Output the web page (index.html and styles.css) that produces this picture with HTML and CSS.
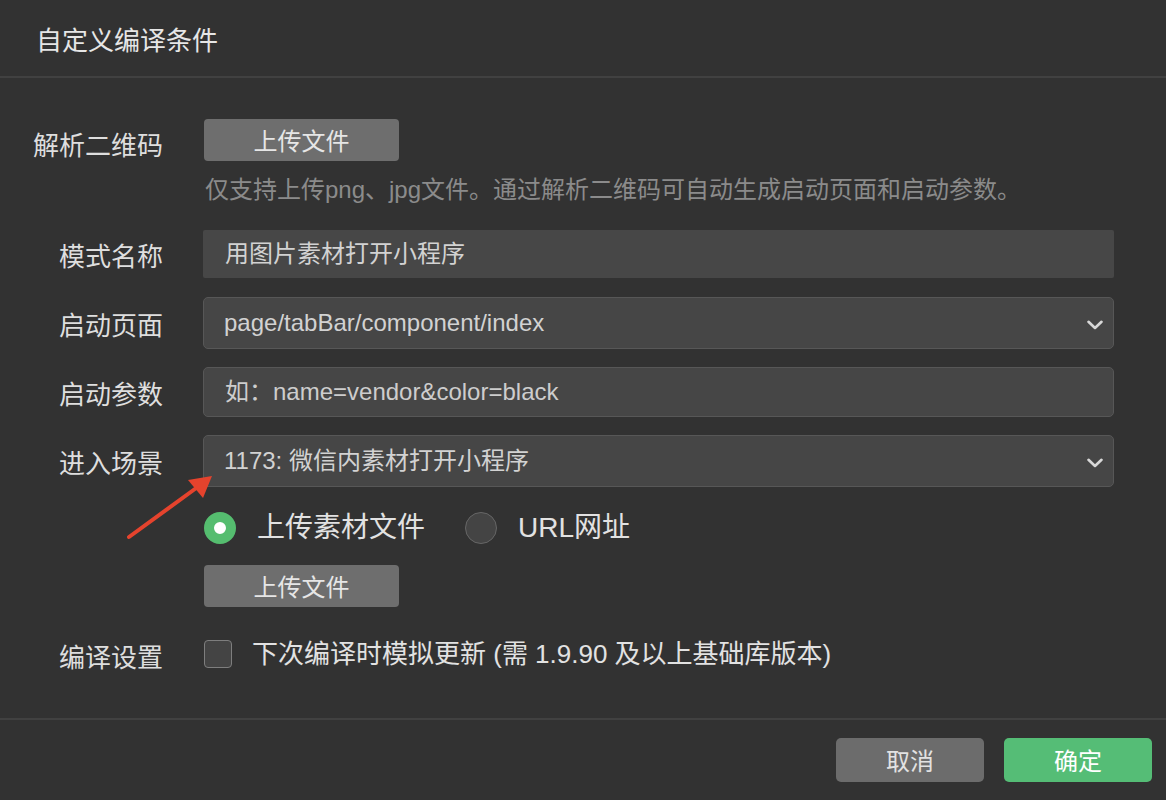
FILE: index.html
```html
<!DOCTYPE html>
<html lang="zh-CN">
<head>
<meta charset="utf-8">
<title>自定义编译条件</title>
<link rel="stylesheet" href="styles.css">
</head>
<body>
<div class="dialog">
  <div class="header"><span class="title">自定义编译条件</span></div>
  <div class="body">
    <div class="row row-qr">
      <div class="label label-qr">解析二维码</div>
      <div class="control">
        <button class="btn-upload">上传文件</button>
        <div class="desc">仅支持上传png、jpg文件。通过解析二维码可自动生成启动页面和启动参数。</div>
      </div>
    </div>
    <div class="row row-name">
      <div class="label">模式名称</div>
      <div class="field field-readonly">用图片素材打开小程序</div>
    </div>
    <div class="row row-page">
      <div class="label">启动页面</div>
      <div class="field field-select">
        <span>page/tabBar/component/index</span>
        <svg class="chev" width="16" height="10" viewBox="0 0 16 10"><path d="M1.5 1.8 L8 8 L14.5 1.8" fill="none" stroke="#d8d8d8" stroke-width="2.6" stroke-linecap="round" stroke-linejoin="round"/></svg>
      </div>
    </div>
    <div class="row row-param">
      <div class="label">启动参数</div>
      <div class="field field-input">如：name=vendor&amp;color=black</div>
    </div>
    <div class="row row-scene">
      <div class="label">进入场景</div>
      <div class="field field-select">
        <span>1173: 微信内素材打开小程序</span>
        <svg class="chev" width="16" height="10" viewBox="0 0 16 10"><path d="M1.5 1.8 L8 8 L14.5 1.8" fill="none" stroke="#d8d8d8" stroke-width="2.6" stroke-linecap="round" stroke-linejoin="round"/></svg>
      </div>
    </div>
    <div class="row row-radio">
      <div class="label"></div>
      <div class="radios">
        <span class="radio radio-on"></span>
        <span class="radio-text">上传素材文件</span>
        <span class="radio radio-off"></span>
        <span class="radio-text">URL网址</span>
      </div>
    </div>
    <div class="row row-upload2">
      <div class="label"></div>
      <button class="btn-upload">上传文件</button>
    </div>
    <div class="row row-check">
      <div class="label label-check">编译设置</div>
      <div class="check-wrap">
        <span class="checkbox"></span>
        <span class="check-text">下次编译时模拟更新 (需 1.9.90 及以上基础库版本)</span>
      </div>
    </div>
  </div>
  <div class="footer">
    <button class="btn btn-cancel">取消</button>
    <button class="btn btn-ok">确定</button>
  </div>
</div>
<svg class="annot-arrow" width="100" height="80" viewBox="120 470 100 80">
  <line x1="129" y1="537" x2="199" y2="486" stroke="#e5432d" stroke-width="4" stroke-linecap="round"/>
  <polygon points="212,476 188,480 203,498" fill="#e5432d"/>
</svg>
</body>
</html>
```

FILE: styles.css
```css
* { box-sizing: border-box; }

html, body {
  margin: 0;
  padding: 0;
  background: #323232;
}

body {
  width: 1166px;
  height: 800px;
  overflow: hidden;
  position: relative;
  font-family: "Liberation Sans", "Noto Sans CJK SC", sans-serif;
  color: #dcdcdc;
}

.dialog {
  display: flex;
  flex-direction: column;
  height: 800px;
}

.header {
  height: 78px;
  flex: none;
  display: flex;
  align-items: center;
  padding: 5px 0 0 36px;
  border-bottom: 2px solid #414141;
}

.title {
  font-size: 26px;
  line-height: 34px;
  color: #e6e6e6;
}

.body {
  flex: 1;
  padding-top: 41px;
}

.row {
  display: flex;
  align-items: center;
}

.label {
  width: 163px;
  flex: none;
  margin-right: 40px;
  text-align: right;
  font-size: 26px;
  line-height: 34px;
  padding-top: 5px;
  color: #dedede;
}

.row-qr { align-items: flex-start; }
.label-qr { padding-top: 10px; }

.control {
  display: flex;
  flex-direction: column;
  align-items: flex-start;
}

.btn-upload {
  width: 195px;
  height: 42px;
  margin-left: 1px;
  border: none;
  border-radius: 4px;
  background: #6e6e6e;
  color: #e6e6e6;
  font-family: inherit;
  font-size: 24px;
  line-height: 30px;
  padding: 3px 0 0;
}

.desc {
  margin-top: 15px;
  margin-left: 2px;
  font-size: 24px;
  line-height: 28px;
  color: #8b8b8b;
  white-space: nowrap;
}

.field {
  width: 911px;
  font-size: 24px;
  line-height: 30px;
  color: #d2d2d2;
  display: flex;
  align-items: center;
}

.field-readonly {
  height: 48px;
  background: #474747;
  border-radius: 2px;
  padding-left: 22px;
}

.field-select {
  height: 52px;
  background: #464646;
  border: 1px solid #575757;
  border-radius: 5px;
  padding: 0 10px 0 20px;
  justify-content: space-between;
}

.chev { margin-top: 3px; }

.field-input {
  height: 50px;
  background: #464646;
  border: 1px solid #575757;
  border-radius: 5px;
  padding-left: 21px;
  color: #cdcdcd;
}

.row-name { margin-top: 26px; }
.row-page { margin-top: 19px; }
.row-param { margin-top: 18px; }
.row-scene { margin-top: 18px; }
.row-radio { margin-top: 25px; }
.row-upload2 { margin-top: 21px; }
.row-check { margin-top: 27px; height: 40px; }

.radios {
  display: flex;
  align-items: center;
  height: 32px;
  margin-left: 1px;
}

.radio {
  width: 32px;
  height: 32px;
  border-radius: 50%;
  flex: none;
}

.radio-on {
  background: #fff;
  border: 10px solid #55bd6f;
}

.radio-off {
  background: #444;
  border: 1.5px solid #666;
  margin-left: 40px;
}

.radio-text {
  margin-left: 21px;
  font-size: 28px;
  line-height: 34px;
  color: #e2e2e2;
}

.label-check { padding-top: 8px; }

.check-wrap {
  display: flex;
  align-items: center;
  margin-left: 1px;
}

.checkbox {
  width: 28px;
  height: 28px;
  flex: none;
  background: #444;
  border: 1.5px solid #7e7e7e;
  border-radius: 4px;
}

.check-text {
  margin-left: 20px;
  font-size: 26px;
  line-height: 34px;
  color: #e2e2e2;
}

.footer {
  height: 82px;
  flex: none;
  border-top: 2px solid #414141;
  display: flex;
  justify-content: flex-end;
  align-items: flex-start;
  gap: 20px;
  padding: 18px 14px 0 0;
}

.btn {
  width: 148px;
  height: 44px;
  border: none;
  border-radius: 5px;
  font-family: inherit;
  font-size: 24px;
  line-height: 30px;
  padding: 3px 0 0;
}

.btn-cancel {
  background: #6c6c6c;
  color: #e2e2e2;
}

.btn-ok {
  background: #55bd76;
  color: #ffffff;
}

.annot-arrow {
  position: absolute;
  left: 120px;
  top: 470px;
}
```
